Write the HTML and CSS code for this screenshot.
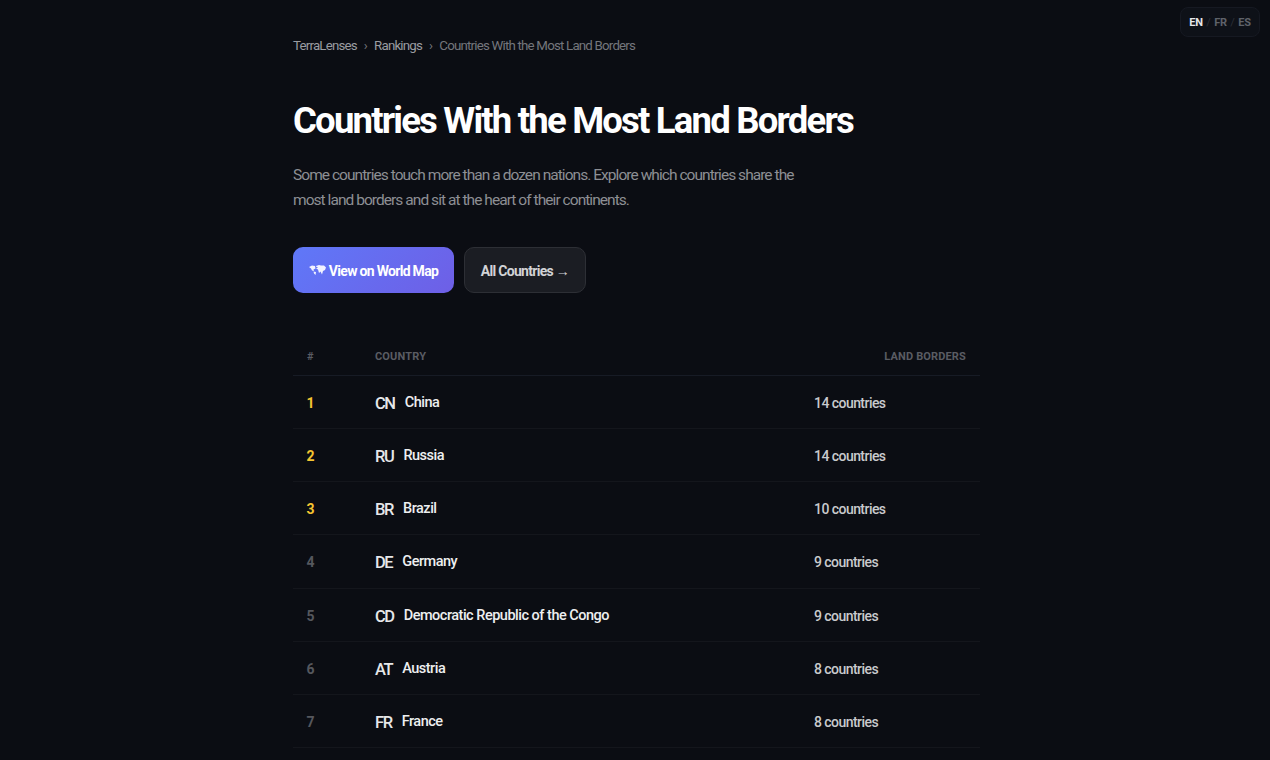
FILE: index.html
```html
<!DOCTYPE html>
<html lang="en">
<head>
	<meta charset="UTF-8">
	<title>Countries With the Most Land Borders</title>
	<link rel="stylesheet" href="styles.css">
</head>
<body>
	<div class="lang"><span class="on">EN</span><i>/</i><span>FR</span><i>/</i><span>ES</span></div>
	<div class="wrap">
		<div class="crumbs"><span>TerraLenses</span><b>›</b><span>Rankings</span><b>›</b><em>Countries With the Most Land Borders</em></div>
		<h1>Countries With the Most Land Borders</h1>
		<p class="intro">Some countries touch more than a dozen nations. Explore which countries share the most land borders and sit at the heart of their continents.</p>
		<div class="btns">
			<a class="btn btn-main">
				<svg class="map-icon" width="17" height="11" viewBox="0 0 17 11"><path fill="#f2f3ff" d="M0 2l3-1.500 3 .5 .5 2.500-2 1 .5 1.500-2-.5-1-2-2-1.500zM4.500 6.500l2.500 .5-.5 3-1.500-1.500zM7 1l3-1 2 .5 3 0 2 2-1 2.500-2 1-1 3.500-1.500-3-1.500 1.500-1-3.500-2-1 2-1-2-1z"/></svg>
				View on World Map</a>
			<a class="btn btn-sub">All Countries →</a>
		</div>
		<div class="rank">
			<div class="rank-head"><span>#</span><span>COUNTRY</span><span class="c-val">LAND BORDERS</span></div>
			<div class="row top"><span class="num">1</span><span><span class="code">CN</span><span class="name">China</span></span><span>14 countries</span></div>
			<div class="row top"><span class="num">2</span><span><span class="code">RU</span><span class="name">Russia</span></span><span>14 countries</span></div>
			<div class="row top"><span class="num">3</span><span><span class="code">BR</span><span class="name">Brazil</span></span><span>10 countries</span></div>
			<div class="row"><span class="num">4</span><span><span class="code">DE</span><span class="name">Germany</span></span><span>9 countries</span></div>
			<div class="row"><span class="num">5</span><span><span class="code">CD</span><span class="name">Democratic Republic of the Congo</span></span><span>9 countries</span></div>
			<div class="row"><span class="num">6</span><span><span class="code">AT</span><span class="name">Austria</span></span><span>8 countries</span></div>
			<div class="row"><span class="num">7</span><span><span class="code">FR</span><span class="name">France</span></span><span>8 countries</span></div>
		</div>
	</div>
</body>
</html>
```

FILE: styles.css
```css
*{margin: 0;padding: 0;box-sizing: border-box;}
html, body{height: 760px; overflow: hidden;}
body{background: #0b0d13; color: #fff; font-family: Roboto, "Liberation Sans", sans-serif;}
.wrap{width: 687px; margin-left: 293px; padding-top: 36px;}

.lang{position: absolute; top: 7px; left: 1180px; width: 80px; height: 30px; display: flex; align-items: center; justify-content: center; gap: 3.5px; border: 1px solid #161922; border-radius: 8px; background: #0e1118; font-size: 11px; font-weight: 700; color: #5f626a; letter-spacing: -.2px;}
.lang .on{color: #e6e7ea;}
.lang i{font-style: normal; font-weight: 400; color: #2c2f37;}

.crumbs{display: flex; align-items: center; gap: 7px; height: 18px; font-size: 13.3px; color: #9a9ca1; letter-spacing: -.8px;}
.crumbs b{font-weight: 400; color: #75777d;}
.crumbs em{font-style: normal; color: #74767c;}

h1{margin-top: 45px; font-size: 36.5px; line-height: 44px; font-weight: 700; letter-spacing: -1.8px;}
.intro{width: 510px; margin-top: 20px; font-size: 15.5px; line-height: 25px; color: #8d8f94; letter-spacing: -.95px;}

.btns{display: flex; gap: 10px; margin-top: 34px;}
.btn{display: flex; align-items: center; justify-content: center; height: 46px; padding-top: 1px; border-radius: 10px; font-size: 14px; font-weight: 700; letter-spacing: -.7px;}
.btn-main{width: 161px; gap: 3px; background: linear-gradient(135deg, #5f78f8, #6e5fe6); color: #fff;}
.btn-sub{width: 122px; background: #1b1d23; border: 1px solid #2d2f35; color: #d2d3d6;}

.rank{margin-top: 40px;}
.rank-head, .row{display: grid; grid-template-columns: 68px 1fr 166px; align-items: center; padding-left: 14px;}
.rank-head{height: 43px; padding-top: 4px; padding-right: 14px; font-size: 11px; font-weight: 700; letter-spacing: .15px; color: #5a5c63; border-bottom: 1px solid #171b25;}
.c-val{text-align: right;}
.row{height: 53.15px; padding-top: 2px; font-size: 14px; font-weight: 500; color: #c9cacd; border-bottom: 1px solid #14161c; letter-spacing: -.55px;}
.num{font-weight: 700; color: #55575d; letter-spacing: 0; margin-left: -.5px;}
.top .num{color: #f5c531;}
.code{display: inline-block; margin-right: 10px; font-size: 16.5px; font-weight: 500; line-height: 20px; color: #e6e7e9; position: relative; top: 1px; letter-spacing: -1.4px;}
.name{font-size: 14.5px; letter-spacing: -.5px; color: #eeeff0; position: relative; top: -1px;}
```
